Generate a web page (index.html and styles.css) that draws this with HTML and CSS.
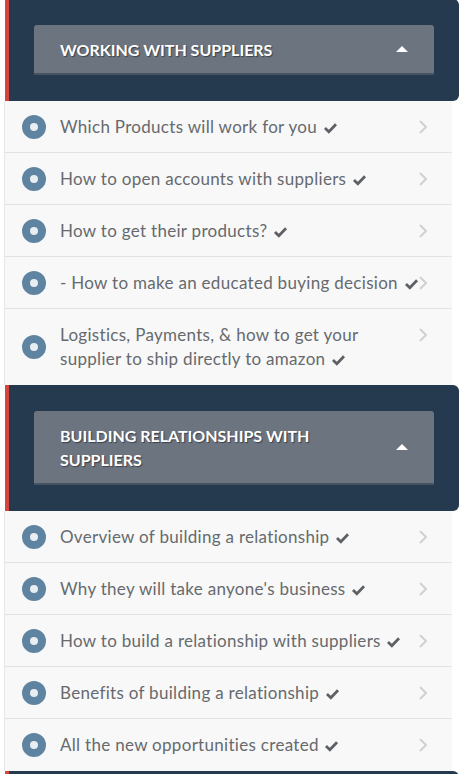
FILE: index.html
```html
<!DOCTYPE html>
<html lang="en">
<head>
    <meta charset="UTF-8">
    <meta name="viewport" content="width=device-width, initial-scale=1.0">
    <title>Course Curriculum</title>
    <link rel="stylesheet" href="styles.css">
</head>
<body>
    <div class="curriculum">
        <!-- Section 1 -->
        <div class="section-head first">
            <div class="section-title">
                <span>Working with suppliers</span>
                <span class="caret"></span>
            </div>
        </div>
        <ul class="lectures">
            <li><span class="dot"></span><span class="name">Which Products will work for you <svg class="check" viewBox="0 0 16 13"><path d="M2 6.5l4.2 4 7.8-8"/></svg></span><svg class="chev" viewBox="0 0 10 16"><path d="M2 2l6 6-6 6"/></svg></li>
            <li><span class="dot"></span><span class="name">How to open accounts with suppliers <svg class="check" viewBox="0 0 16 13"><path d="M2 6.5l4.2 4 7.8-8"/></svg></span><svg class="chev" viewBox="0 0 10 16"><path d="M2 2l6 6-6 6"/></svg></li>
            <li><span class="dot"></span><span class="name">How to get their products? <svg class="check" viewBox="0 0 16 13"><path d="M2 6.5l4.2 4 7.8-8"/></svg></span><svg class="chev" viewBox="0 0 10 16"><path d="M2 2l6 6-6 6"/></svg></li>
            <li><span class="dot"></span><span class="name">- How to make an educated buying decision <svg class="check" viewBox="0 0 16 13"><path d="M2 6.5l4.2 4 7.8-8"/></svg></span><svg class="chev" viewBox="0 0 10 16"><path d="M2 2l6 6-6 6"/></svg></li>
            <li class="top"><span class="dot"></span><span class="name">Logistics, Payments, &amp; how to get your supplier to ship directly to amazon <svg class="check" viewBox="0 0 16 13"><path d="M2 6.5l4.2 4 7.8-8"/></svg></span><svg class="chev" viewBox="0 0 10 16"><path d="M2 2l6 6-6 6"/></svg></li>
        </ul>

        <!-- Section 2 -->
        <div class="section-head">
            <div class="section-title">
                <span>Building relationships with suppliers</span>
                <span class="caret"></span>
            </div>
        </div>
        <ul class="lectures">
            <li><span class="dot"></span><span class="name">Overview of building a relationship <svg class="check" viewBox="0 0 16 13"><path d="M2 6.5l4.2 4 7.8-8"/></svg></span><svg class="chev" viewBox="0 0 10 16"><path d="M2 2l6 6-6 6"/></svg></li>
            <li><span class="dot"></span><span class="name">Why they will take anyone's business <svg class="check" viewBox="0 0 16 13"><path d="M2 6.5l4.2 4 7.8-8"/></svg></span><svg class="chev" viewBox="0 0 10 16"><path d="M2 2l6 6-6 6"/></svg></li>
            <li><span class="dot"></span><span class="name">How to build a relationship with suppliers <svg class="check" viewBox="0 0 16 13"><path d="M2 6.5l4.2 4 7.8-8"/></svg></span><svg class="chev" viewBox="0 0 10 16"><path d="M2 2l6 6-6 6"/></svg></li>
            <li><span class="dot"></span><span class="name">Benefits of building a relationship <svg class="check" viewBox="0 0 16 13"><path d="M2 6.5l4.2 4 7.8-8"/></svg></span><svg class="chev" viewBox="0 0 10 16"><path d="M2 2l6 6-6 6"/></svg></li>
            <li><span class="dot"></span><span class="name">All the new opportunities created <svg class="check" viewBox="0 0 16 13"><path d="M2 6.5l4.2 4 7.8-8"/></svg></span><svg class="chev" viewBox="0 0 10 16"><path d="M2 2l6 6-6 6"/></svg></li>
        </ul>

        <!-- Section 3 (continues below the fold) -->
        <div class="section-head">
            <div class="section-title"><span>&nbsp;</span></div>
        </div>
    </div>
</body>
</html>
```

FILE: styles.css
```css
:root {
    --head-bg: #253a4f;
    --head-accent: #d5453e;
    --title-bg: #6c7480;
    --title-border: #485361;
    --row-bg: #f8f8f8;
    --row-line: #e3e3e3;
    --text: #666a6e;
    --dot: #5f84a2;
}

* {
    box-sizing: border-box;
    margin: 0;
    padding: 0;
}

body {
    background: #ffffff;
    font-family: Lato, "Open Sans", sans-serif;
}

.curriculum {
    width: 459px;
    padding-left: 4px;
}

.section-head {
    margin-left: 1px;
    background: var(--head-bg);
    border-left: 4px solid var(--head-accent);
    border-radius: 0 6px 6px 0;
    padding: 26px 25px 26px 25px;
}

.section-head.first {
    margin-top: -1px;
}

.section-title {
    display: flex;
    justify-content: space-between;
    align-items: center;
    background: var(--title-bg);
    border-bottom: 2px solid var(--title-border);
    border-radius: 3px 3px 0 0;
    padding: 13px 26px 11px 26px;
    color: #ffffff;
    font-weight: 700;
    font-size: 16px;
    line-height: 24px;
    text-transform: uppercase;
    text-shadow: 1px 1px 1px #3a414b;
}

.section-title span:first-child {
    max-width: 290px;
}

.caret {
    width: 0;
    height: 0;
    border-left: 6px solid transparent;
    border-right: 6px solid transparent;
    border-bottom: 6px solid #ffffff;
    margin-top: -2px;
}

.lectures {
    list-style: none;
    width: 448px;
    background: var(--row-bg);
    border-left: 1px solid #e6e6e6;
}

.lectures li {
    display: flex;
    align-items: center;
    padding: 14px 24px 13px 17px;
    border-bottom: 1px solid var(--row-line);
    font-size: 17px;
    line-height: 24px;
    letter-spacing: 0.3px;
    color: var(--text);
}

.lectures li:last-child {
    border-bottom: none;
    padding-bottom: 14px;
}

.dot {
    flex: none;
    width: 24px;
    height: 24px;
    border-radius: 50%;
    border: 8px solid var(--dot);
    background: #e9eef2;
    margin-right: 14px;
}

.name {
    flex: 1;
}

.check {
    width: 15px;
    height: 12px;
    margin-left: 1px;
    fill: none;
    stroke: #5d6166;
    stroke-width: 3;
    vertical-align: -1px;
}

.chev {
    flex: none;
    width: 10px;
    height: 16px;
    fill: none;
    stroke: #d0d0d0;
    stroke-width: 2;
    margin-left: -8px;
}

.lectures li.top {
    padding-bottom: 14px;
}

.lectures li.top .name {
    padding-right: 40px;
}

.lectures li.top .chev {
    align-self: flex-start;
    margin-top: 4px;
}
```
